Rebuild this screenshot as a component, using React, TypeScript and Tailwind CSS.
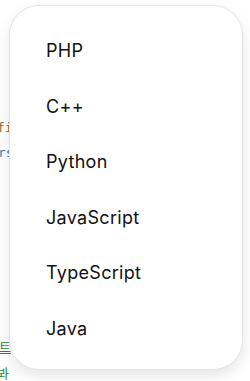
import React from "react";

const languages = ["PHP", "C++", "Python", "JavaScript", "TypeScript", "Java"];

export default function App() {
  return (
    <div className="relative w-[250px] h-[381px] overflow-hidden bg-white">
      {/* code editor peeking out behind the menu */}
      <div className="absolute inset-0 font-['DejaVu_Sans_Mono',monospace] text-[13px] leading-none">
        <div className="absolute left-[-3px] top-[121px] text-[#a0651c]">fi</div>
        <div className="absolute left-[-2px] top-[146px] text-[#2f7fc1]">rs</div>
        <div className="absolute left-[-1px] top-[340px] text-[#2e8b2e] underline font-['Noto_Sans_CJK_KR',sans-serif]">트</div>
        <div className="absolute left-[-3px] top-[366px] text-[#2e8b2e] font-['Noto_Sans_CJK_KR',sans-serif]">봐</div>
      </div>

      {/* dropdown menu */}
      <div className="absolute left-[9px] top-[5px] w-[234px] h-[365px] rounded-[30px] bg-white border border-[#e4e4e4] shadow-[0_6px_14px_rgba(0,0,0,0.10)] pt-[17px] font-['Inter',sans-serif]">
        <ul className="flex flex-col">
          {languages.map((lang) => (
            <li key={lang} className="h-[55.5px] flex items-center pl-[36px] text-[18px] tracking-[0.3px] text-[#111]">
              {lang}
            </li>
          ))}
        </ul>
      </div>
    </div>
  );
}
